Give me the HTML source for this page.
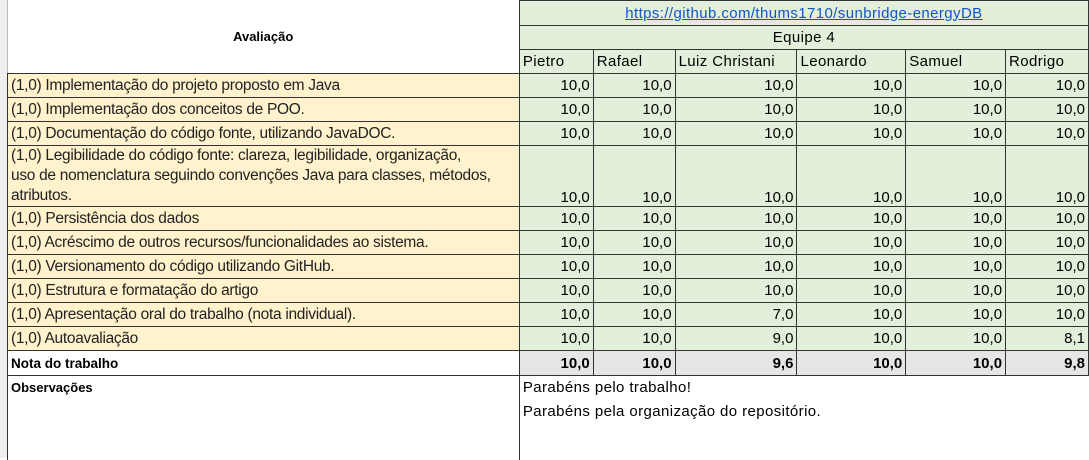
<!DOCTYPE html>
<html><head><meta charset="utf-8"><style>
body{margin:0;width:1089px;height:458px;overflow:hidden;background:#fff;font-family:"Liberation Sans",sans-serif;position:relative}
.strip{position:absolute;left:0;top:0;width:7px;height:458px;background:#eee;border-right:1px solid #bbb}
table{position:absolute;left:7px;top:0;border-collapse:collapse;table-layout:fixed}
td{border:1px solid #333;padding:0 3px;font-size:15.5px;white-space:nowrap;overflow:hidden;line-height:17px}
.b{background:#FFF2CC;color:#222;letter-spacing:-0.3px}
.g{background:#E2EFDA;text-align:right;font-size:15px}
.n{background:#E2EFDA;text-align:left;font-size:15px;letter-spacing:0.4px}
.t{background:#E7E6E6;text-align:right;font-weight:bold;font-size:15px}
.h{font-weight:bold;font-size:13px}
</style></head><body>
<div class="strip"></div>
<table>
<colgroup><col style="width:512px"><col style="width:74px"><col style="width:82px"><col style="width:122px"><col style="width:109px"><col style="width:100px"><col style="width:83px"></colgroup>
<tr style="height:25px"><td rowspan="3" class="h" style="text-align:center;border-top:none;border-left:none">Avaliação</td><td colspan="6" class="n" style="text-align:center;color:#1155cc;text-decoration:underline">https://github.com/thums1710/sunbridge-energyDB</td></tr>
<tr style="height:24px"><td colspan="6" class="n" style="text-align:center">Equipe 4</td></tr>
<tr style="height:24px"><td class="n">Pietro</td><td class="n">Rafael</td><td class="n">Luiz Christani</td><td class="n">Leonardo</td><td class="n">Samuel</td><td class="n">Rodrigo</td></tr>
<tr style="height:24px"><td class="b">(1,0) Implementação do projeto proposto em Java</td><td class="g">10,0</td><td class="g">10,0</td><td class="g">10,0</td><td class="g">10,0</td><td class="g">10,0</td><td class="g">10,0</td></tr>
<tr style="height:24px"><td class="b">(1,0) Implementação dos conceitos de POO.</td><td class="g">10,0</td><td class="g">10,0</td><td class="g">10,0</td><td class="g">10,0</td><td class="g">10,0</td><td class="g">10,0</td></tr>
<tr style="height:24px"><td class="b">(1,0) Documentação do código fonte, utilizando JavaDOC.</td><td class="g">10,0</td><td class="g">10,0</td><td class="g">10,0</td><td class="g">10,0</td><td class="g">10,0</td><td class="g">10,0</td></tr>
<tr style="height:61px"><td class="b" style="vertical-align:bottom;line-height:20px">(1,0) Legibilidade do código fonte: clareza, legibilidade, organização,<br>uso de nomenclatura seguindo convenções Java para classes, métodos,<br>atributos.</td><td class="g" style="vertical-align:bottom">10,0</td><td class="g" style="vertical-align:bottom">10,0</td><td class="g" style="vertical-align:bottom">10,0</td><td class="g" style="vertical-align:bottom">10,0</td><td class="g" style="vertical-align:bottom">10,0</td><td class="g" style="vertical-align:bottom">10,0</td></tr>
<tr style="height:24px"><td class="b">(1,0) Persistência dos dados</td><td class="g">10,0</td><td class="g">10,0</td><td class="g">10,0</td><td class="g">10,0</td><td class="g">10,0</td><td class="g">10,0</td></tr>
<tr style="height:24px"><td class="b">(1,0) Acréscimo de outros recursos/funcionalidades ao sistema.</td><td class="g">10,0</td><td class="g">10,0</td><td class="g">10,0</td><td class="g">10,0</td><td class="g">10,0</td><td class="g">10,0</td></tr>
<tr style="height:24px"><td class="b">(1,0) Versionamento do código utilizando GitHub.</td><td class="g">10,0</td><td class="g">10,0</td><td class="g">10,0</td><td class="g">10,0</td><td class="g">10,0</td><td class="g">10,0</td></tr>
<tr style="height:24px"><td class="b">(1,0) Estrutura e formatação do artigo</td><td class="g">10,0</td><td class="g">10,0</td><td class="g">10,0</td><td class="g">10,0</td><td class="g">10,0</td><td class="g">10,0</td></tr>
<tr style="height:24px"><td class="b">(1,0) Apresentação oral do trabalho (nota individual).</td><td class="g">10,0</td><td class="g">10,0</td><td class="g">7,0</td><td class="g">10,0</td><td class="g">10,0</td><td class="g">10,0</td></tr>
<tr style="height:24px"><td class="b">(1,0) Autoavaliação</td><td class="g">10,0</td><td class="g">10,0</td><td class="g">9,0</td><td class="g">10,0</td><td class="g">10,0</td><td class="g">8,1</td></tr>
<tr style="height:25px"><td class="h" style="font-size:13.5px">Nota do trabalho</td><td class="t">10,0</td><td class="t">10,0</td><td class="t">9,6</td><td class="t">10,0</td><td class="t">10,0</td><td class="t">9,8</td></tr>
<tr style="height:84px"><td class="h" style="vertical-align:top;padding-top:3px;border-bottom:none">Observações</td><td colspan="6" style="vertical-align:top;font-size:15px;letter-spacing:0.4px;line-height:24px;padding-top:0;border-bottom:none;border-right:none">Parabéns pelo trabalho!<br>Parabéns pela organização do repositório.</td></tr>
</table>
</body></html>
